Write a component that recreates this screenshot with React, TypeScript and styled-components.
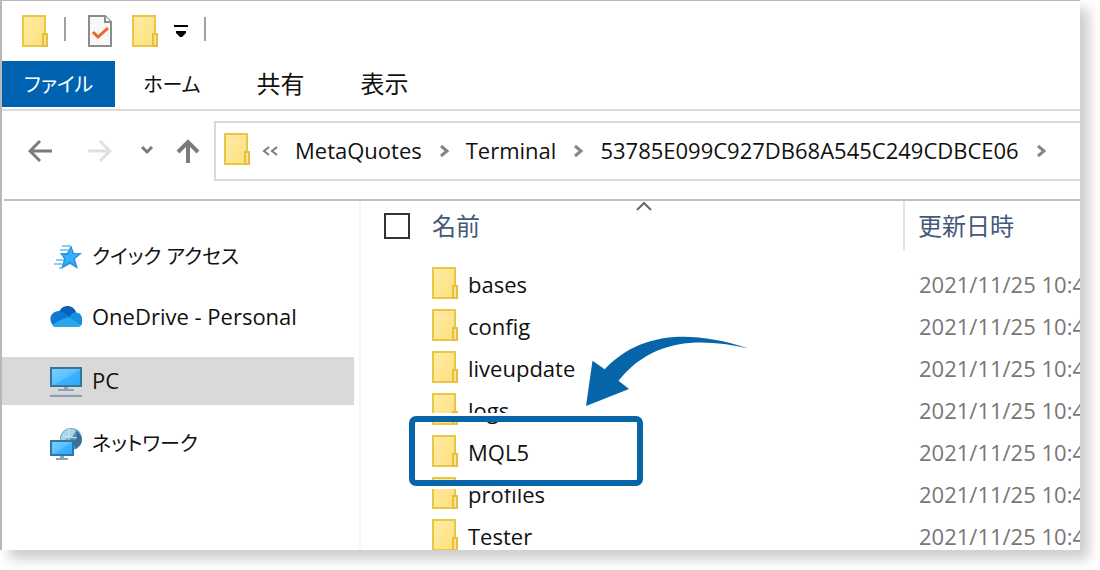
import React from "react";
import styled, { createGlobalStyle, css } from "styled-components";

const blue = "#0063b1";
const accent = "#0565a8";

const GlobalStyle = createGlobalStyle`
  *, *::before, *::after { box-sizing: border-box; }
  body {
    margin: 0;
    background: #fff;
    color: #111;
    font-family: "Open Sans", "Noto Sans CJK JP", sans-serif;
    font-size: 22px;
    line-height: 32px;
    font-feature-settings: "palt";
  }
  button {
    margin: 0;
    padding: 0;
    border: 0;
    background: none;
    color: inherit;
    font: inherit;
    font-feature-settings: inherit;
    white-space: nowrap;
    cursor: pointer;
  }
  svg { display: block; flex: none; }
`;

const Page = styled.div`
  height: 100vh;
  padding: 0 20px 20px 0;
  overflow: hidden;
`;

const Window = styled.main`
  display: flex;
  flex-direction: column;
  height: 100%;
  border-top: 1px solid #b8b8b8;
  border-left: 2px solid #b8b8b8;
  background: #fff;
  box-shadow: 9px 9px 12px rgba(0, 0, 0, 0.2);
`;

const QuickBar = styled.div`
  display: flex;
  flex: none;
  align-items: center;
  height: 60px;
  padding-left: 20px;
`;

const QuickButton = styled.button<{ $gap: number }>`
  margin-right: ${(p) => p.$gap}px;
`;

const Divider = styled.span<{ $gap: number }>`
  width: 2px;
  height: 24px;
  margin: 0 ${(p) => p.$gap}px 4px 0;
  background: #a0a0a0;
`;

const Tabs = styled.nav`
  display: flex;
  flex: none;
  height: 50px;
  padding-bottom: 2px;
  border-bottom: 2px solid #dcdcdc;
`;

const Kana = styled.span`
  font-size: 20px;
`;

const Kanji = styled.span`
  font-size: 24px;
`;

const Tab = styled.button<{ $active?: boolean }>`
  height: 46px;
  padding: 0 28px;
  ${(p) =>
    p.$active &&
    css`
      padding: 0 22px;
      background: ${blue};
      color: #fff;
    `}
`;

const AddressRow = styled.div`
  display: flex;
  flex: none;
  align-items: center;
  height: 90px;
  margin-left: 2px;
  padding-bottom: 8px;
  border-bottom: 2px solid #bfbfbf;
`;

const NavButtons = styled.div`
  display: flex;
  align-items: center;
  width: 210px;
  padding-left: 24px;
`;

const NavButton = styled.button<{ $gap: number }>`
  margin-right: ${(p) => p.$gap}px;
`;

const AddressBox = styled.div`
  display: flex;
  flex: 1;
  align-items: center;
  min-width: 0;
  height: 60px;
  padding-left: 8px;
  overflow: hidden;
  border: 2px solid #d9d9d9;
  border-right: 0;
`;

const FolderButton = styled.button`
  padding-bottom: 4px;
`;

const Crumb = styled.button`
  margin: 0 17px;
  padding-bottom: 2px;
`;

const Body = styled.div`
  display: flex;
  flex: 1;
  min-height: 0;
  overflow: hidden;
`;

const Sidebar = styled.nav`
  display: flex;
  flex: none;
  flex-direction: column;
  gap: 14px;
  width: 359px;
  padding: 33px 5px 0 0;
  border-right: 2px solid #f6f6f6;
`;

const Place = styled.a<{ $selected?: boolean }>`
  display: flex;
  align-items: center;
  gap: 10px;
  height: 46px;
  padding-left: 48px;
  color: inherit;
  text-decoration: none;
  ${(p) =>
    p.$selected &&
    css`
      height: 48px;
      margin: 3px 0 2px;
      background: #d9d9d9;
    `}
`;

const PlaceName = styled.span`
  padding-bottom: 2px;
`;

const Files = styled.section`
  flex: 1;
  min-width: 0;
  padding-left: 23px;
`;

const FileTable = styled.table`
  width: 100%;
  border-collapse: collapse;
  table-layout: fixed;
`;

const HeadCell = styled.th<{ $date?: boolean }>`
  position: relative;
  height: 50px;
  padding: 0;
  color: #44597a;
  font-weight: 400;
  text-align: left;
  ${(p) =>
    p.$date &&
    css`
      width: 176px;
      padding-left: 13px;
      border-left: 2px solid #e2e2e2;
    `}
`;

const HeadLabel = styled.div`
  display: flex;
  align-items: center;
  gap: 22px;
`;

const CheckAll = styled.input`
  appearance: none;
  width: 26px;
  height: 26px;
  margin: 0;
  border: 2px solid #333;
  background: #fff;
`;

const SortMark = styled.span`
  position: absolute;
  top: 0;
  left: calc(50% - 8px);
`;

const Spacer = styled.tbody`
  td {
    height: 12px;
    padding: 0;
  }
`;

const NameCell = styled.td`
  position: relative;
  height: 42px;
  padding: 0 0 0 48px;
`;

const FileName = styled.div`
  display: flex;
  align-items: center;
  gap: 10px;

  svg {
    margin-bottom: 2px;
  }
`;

const DateCell = styled.td`
  padding: 0 0 0 15px;
  overflow: hidden;
  color: #777;
  white-space: nowrap;
`;

const Highlight = styled.span`
  position: absolute;
  z-index: 1;
  top: -15px;
  left: 25px;
  width: 234px;
  height: 70px;
  border: 6px solid ${accent};
  border-radius: 7px;
  box-shadow: 0 0 0 3px #fff;
`;

const Pointer = styled.svg`
  position: absolute;
  z-index: 2;
  top: -95px;
  left: 202px;
`;

function FolderIcon() {
  return (
    <svg width="26" height="32" viewBox="0 0 26 32" aria-hidden="true">
      <defs>
        <linearGradient id="folder" x1="0" y1="0" x2="1" y2="1">
          <stop offset="0" stopColor="#ffeca6" />
          <stop offset="1" stopColor="#fddf7c" />
        </linearGradient>
      </defs>
      <path d="M1 1H23V31H1Z" fill="url(#folder)" stroke="#eac645" strokeWidth="2" />
      <path d="M21 19H25V31H21Z" fill="#fde48c" stroke="#e6be42" strokeWidth="2" />
    </svg>
  );
}

function PropertiesIcon() {
  return (
    <svg width="24" height="32" viewBox="0 0 24 32" aria-hidden="true">
      <path d="M1 1H17L23 7V31H1Z" fill="#f8f8f8" stroke="#8c8c8c" strokeWidth="2" />
      <path d="M17 1V7H23" fill="#fff" stroke="#8c8c8c" strokeWidth="2" />
      <path d="M5 17L10 22L20 13" fill="none" stroke="#f26522" strokeWidth="3" />
    </svg>
  );
}

function CustomizeIcon() {
  return (
    <svg width="14" height="12" viewBox="0 0 14 12" aria-hidden="true">
      <path d="M0 0H14V2H0ZM2 6H12V8L8 12H6L2 8Z" fill="#000" />
    </svg>
  );
}

type StrokeIconProps = { w: number; h: number; d: string; color?: string; sw?: number };

function StrokeIcon({ w, h, d, color = "#7b7b7b", sw = 3 }: StrokeIconProps) {
  return (
    <svg width={w} height={h} viewBox={`0 0 ${w} ${h}`} fill="none" stroke={color} strokeWidth={sw} aria-hidden="true">
      <path d={d} />
    </svg>
  );
}

const Chevron = () => <StrokeIcon w={10} h={14} d="M2 2L8 7L2 12" color="#858585" />;

function StarIcon() {
  return (
    <svg width="32" height="32" viewBox="0 0 32 32" aria-hidden="true">
      <path d="M21 4L24 12H32L25 18L28 28L20 23L11 28L14 18L10 12H17Z" fill="#2b95dd" />
      <path d="M21 7L22.500 13H29L23 17.500L25 24L20 20L14 24L16 17L12 14H18Z" fill="#38b0fb" />
      <path d="M12 5H20M10 9H18M6 19H14M4 23H12M9 27H13" stroke="#69b9ee" strokeWidth="1.500" />
    </svg>
  );
}

function CloudIcon() {
  return (
    <svg width="32" height="32" viewBox="0 0 32 32" aria-hidden="true">
      <path d="M9 11C12 3 23 3 26 11L22 18L10 14Z" fill="#0862b7" />
      <path d="M2 23C-2 17 2 10 9 10C13 10 18 14 21 17L10 26H6C4 26 3 25 2 23Z" fill="#0f78d4" />
      <path d="M20 15C22 10 31 10 32 17V23C31 25 29 26 27 26L16 19Z" fill="#1490df" />
      <path d="M3 24C8 19 14 18 18 16C22 18 28 22 31 24C30 26 28 26 26 26H7C5 26 4 25 3 24Z" fill="#28a8ea" />
    </svg>
  );
}

function PcIcon() {
  return (
    <svg width="32" height="32" viewBox="0 0 32 32" aria-hidden="true">
      <defs>
        <linearGradient id="screen" x1="0" y1="0" x2="1" y2="1">
          <stop offset="0" stopColor="#7fcfff" />
          <stop offset="0.5" stopColor="#5bc0ff" />
          <stop offset="0.55" stopColor="#3bb2ff" />
          <stop offset="1" stopColor="#2ba6fb" />
        </linearGradient>
      </defs>
      <path d="M1 3H31V21H1Z" fill="url(#screen)" stroke="#33779f" strokeWidth="2" />
      <path d="M14 22H18V24H24V26H8V24H14Z" fill="#8ea3b7" />
      <path d="M0 30H32V32H0Z" fill="#8b9db5" />
      <path d="M2 28H30V30H2Z" fill="#ccd1d5" />
    </svg>
  );
}

function NetworkIcon() {
  return (
    <svg width="32" height="32" viewBox="0 0 32 32" aria-hidden="true">
      <circle cx="21" cy="11" r="11" fill="#5796bb" />
      <path d="M12 6C15 0 23 -1 26 3L22 9L15 12H10Z" fill="#a9d3e6" />
      <path d="M26 3C31 6 33 12 31 16L26 21L23 14L27 10Z" fill="#386f91" />
      <path d="M19 1V12M13 8L27 10" stroke="#c9e6f1" strokeWidth="1" />
      <path d="M1 13H23V27H1Z" fill="url(#screen)" stroke="#33779f" strokeWidth="2" />
      <path d="M10 28H14V30H18V32H6V30H10Z" fill="#8ea3b7" />
    </svg>
  );
}

const crumbs = ["MetaQuotes", "Terminal", "53785E099C927DB68A545C249CDBCE06"];
const folders = ["bases", "config", "liveupdate", "logs", "MQL5", "profiles", "Tester"];

export default function App() {
  return (
    <Page>
      <GlobalStyle />
      <Window>
        <QuickBar>
          <QuickButton $gap={16} aria-label="Terminal"><FolderIcon /></QuickButton>
          <Divider $gap={22} />
          <QuickButton $gap={20} aria-label="Properties"><PropertiesIcon /></QuickButton>
          <QuickButton $gap={16} aria-label="New folder"><FolderIcon /></QuickButton>
          <QuickButton $gap={16} aria-label="Customize"><CustomizeIcon /></QuickButton>
          <Divider $gap={0} />
        </QuickBar>
        <Tabs>
          <Tab $active><Kana>ファイル</Kana></Tab>
          <Tab><Kana>ホーム</Kana></Tab>
          <Tab><Kanji>共有</Kanji></Tab>
          <Tab><Kanji>表示</Kanji></Tab>
        </Tabs>
        <AddressRow>
          <NavButtons>
            <NavButton $gap={36} aria-label="Back"><StrokeIcon w={24} h={24} d="M24 12H2M12 2L2 12L12 22" /></NavButton>
            <NavButton $gap={28} aria-label="Forward"><StrokeIcon w={24} h={24} color="#e0e0e0" d="M0 12H22M12 2L22 12L12 22" /></NavButton>
            <NavButton $gap={22} aria-label="Recent"><StrokeIcon w={14} h={10} d="M2 1L7 6L12 1" /></NavButton>
            <NavButton $gap={0} aria-label="Up"><StrokeIcon w={24} h={24} sw={4} d="M12 24V3M2 13L12 3L22 13" /></NavButton>
          </NavButtons>
          <AddressBox>
            <FolderButton aria-label="Location"><FolderIcon /></FolderButton>
            <NavButton $gap={0} aria-label="More">
              <StrokeIcon w={28} h={14} sw={2} d="M19 3L14 7L19 11M27 3L22 7L27 11" />
            </NavButton>
            {crumbs.map((name) => (
              <React.Fragment key={name}>
                <Crumb>{name}</Crumb>
                <Chevron />
              </React.Fragment>
            ))}
          </AddressBox>
        </AddressRow>
        <Body>
          <Sidebar>
            <Place href="#quick"><StarIcon /><PlaceName><Kana>クイック アクセス</Kana></PlaceName></Place>
            <Place href="#onedrive"><CloudIcon /><PlaceName>OneDrive - Personal</PlaceName></Place>
            <Place href="#pc" $selected><PcIcon /><PlaceName>PC</PlaceName></Place>
            <Place href="#network"><NetworkIcon /><PlaceName><Kana>ネットワーク</Kana></PlaceName></Place>
          </Sidebar>
          <Files>
            <FileTable>
              <thead>
                <tr>
                  <HeadCell>
                    <HeadLabel>
                      <CheckAll type="checkbox" aria-label="Select all" />
                      <Kanji>名前</Kanji>
                    </HeadLabel>
                    <SortMark><StrokeIcon w={16} h={10} sw={2} color="#666" d="M1 9L8 2L15 9" /></SortMark>
                  </HeadCell>
                  <HeadCell $date><Kanji>更新日時</Kanji></HeadCell>
                </tr>
              </thead>
              <Spacer><tr><td colSpan={2} /></tr></Spacer>
              <tbody>
                {folders.map((name) => (
                  <tr key={name}>
                    <NameCell>
                      <FileName><FolderIcon />{name}</FileName>
                      {name === "MQL5" && (
                        <>
                          <Highlight />
                          <Pointer width="164" height="72" viewBox="0 0 164 72" aria-hidden="true">
                            <path d="M0 70L6.500 24.700L18.700 33.300C52 -2 100 -8 162.500 12.500C112 1 66 3 32.500 44.700L43 53Z" fill={accent} />
                          </Pointer>
                        </>
                      )}
                    </NameCell>
                    <DateCell>2021/11/25 10:43</DateCell>
                  </tr>
                ))}
              </tbody>
            </FileTable>
          </Files>
        </Body>
      </Window>
    </Page>
  );
}
